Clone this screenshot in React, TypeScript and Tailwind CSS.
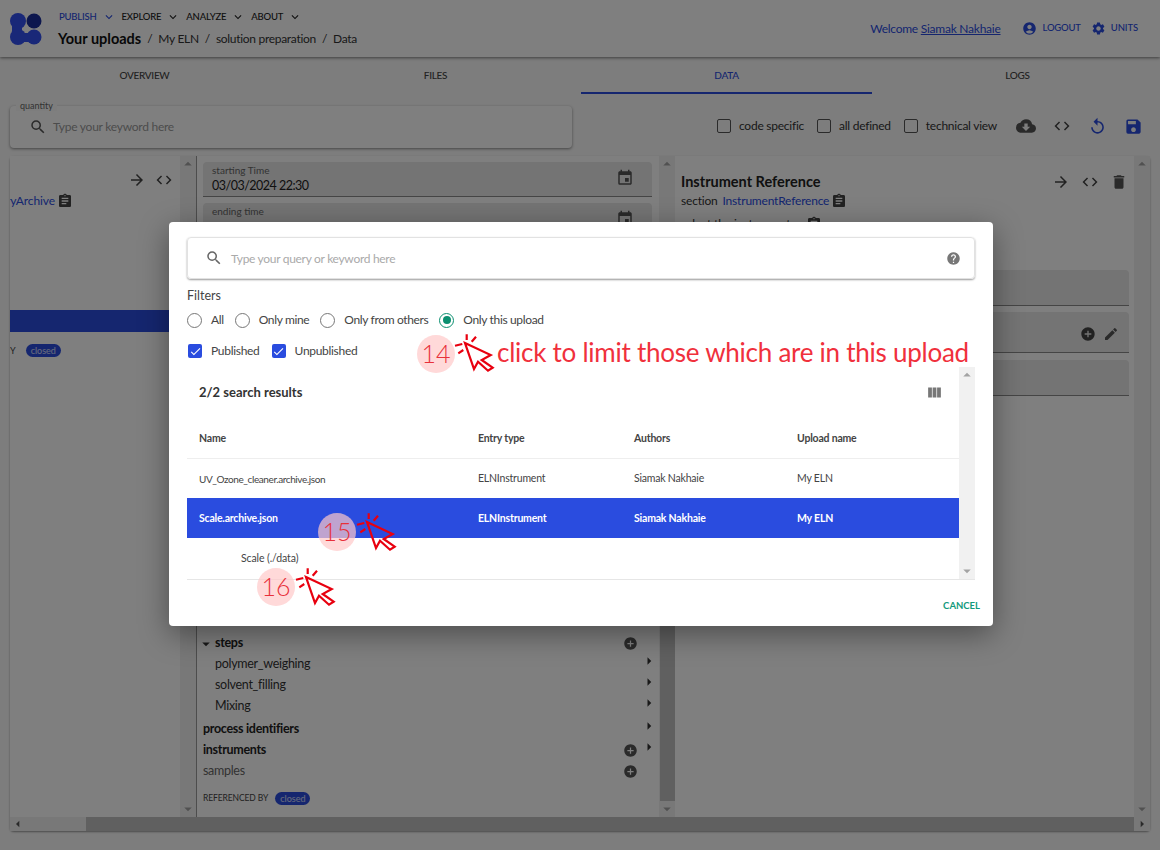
import React from "react";
import {
  MdArrowForward, MdCode, MdAssignment, MdEvent, MdExpandMore, MdAccountCircle, MdSettings, MdSearch,
  MdCloudDownload, MdReplay, MdSave, MdDelete, MdAddCircle, MdEdit, MdHelp, MdViewColumn, MdArrowRight,
  MdArrowDropDown, MdArrowDropUp, MdCheck, MdArrowLeft,
} from "react-icons/md";

const font = { fontFamily: '"Lato", "Noto Sans", sans-serif' };

function Logo() {
  return (
    <svg width="32" height="34" viewBox="0 0 32 34" className="shrink-0">
      <circle cx="24" cy="9" r="7.5" fill="#1b2f9c" />
      <circle cx="8" cy="9" r="8" fill="#3350f0" />
      <circle cx="8" cy="25" r="8" fill="#3350f0" />
      <circle cx="24" cy="25" r="7.5" fill="#3350f0" />
      <rect x="2" y="9" width="10" height="16" fill="#3350f0" />
      <rect x="8" y="21" width="16" height="9" fill="#3350f0" />
    </svg>
  );
}

function NavItem({ label, active }: { label: string; active?: boolean }) {
  return (
    <div className={`flex items-center gap-[5px] text-[9.5px] font-medium tracking-[-0.2px] ${active ? "text-[#2a4cdf]" : "text-[#222]"}`}>
      <span>{label}</span>
      <MdExpandMore size={14} />
    </div>
  );
}

function Cursor({ x, y }: { x: number; y: number }) {
  return (
    <svg width="44" height="44" viewBox="-12 -11 44 44" className="absolute" style={{ left: x - 12, top: y - 11 }}>
      <path d="M0 0 L25.7 12 L16.7 17 L27.7 24.7 L23 27.7 L13 18.7 L9 26 Z" fill="none" stroke="#e8000f" strokeWidth="2.2" strokeLinejoin="miter" />
      <path d="M1.7 -8.7 V-3 M11 -6.3 L6.7 -1.3 M-10 2.7 L-2.7 1 M-6.7 10.3 L-1.7 7" stroke="#e8000f" strokeWidth="2.2" fill="none" />
    </svg>
  );
}

function Badge({ n, x, y }: { n: string; x: number; y: number }) {
  return (
    <div
      className="absolute flex h-[38px] w-[38px] items-center justify-center rounded-full bg-[#ffc8c8]/70 text-[25px] font-light text-[#e8303a]"
      style={{ left: x, top: y }}
    >
      {n}
    </div>
  );
}

function VBar({ thumb }: { thumb?: boolean }) {
  return (
    <div className="flex w-[16px] shrink-0 flex-col items-center justify-between bg-[#f1f1f1] text-[#a3a3a3]">
      <MdArrowDropUp size={18} className="-my-[1px]" />
      {thumb ? <div className="mt-[60px] w-[15px] grow bg-[#c1c1c1]" /> : null}
      <MdArrowDropDown size={18} className="-my-[1px]" />
    </div>
  );
}

function Field({ label, value, h = "h-[35px]", mt = "" }: { label?: string; value?: string; h?: string; mt?: string }) {
  return (
    <div className={`relative flex shrink-0 items-start rounded-t border-b border-[#8a8a8a] bg-[#e8e8e8] px-[9px] pt-[2px] ${h} ${mt}`}>
      <div className="flex flex-col leading-none">
        {label ? <span className="text-[10px] leading-[12px] text-[#666]">{label}</span> : null}
        {value ? <span className="mt-px text-[12.5px] leading-[18px] tracking-[-0.5px] text-[#222]">{value}</span> : null}
      </div>
      {label ? <MdEvent size={18} className="absolute right-[18px] top-[7px] text-[#555]" /> : null}
    </div>
  );
}

function TreeRow({ label, cls, plus, arrow, expand, offset = 0 }: { label: string; cls: string; plus?: boolean; arrow?: boolean; expand?: boolean; offset?: number }) {
  return (
    <div className="relative flex h-[21px] items-center">
      {expand ? <MdArrowDropDown size={18} className="-ml-[6px] text-[#333]" /> : null}
      <span className={`text-[12.5px] tracking-[-0.3px] ${cls}`}>{label}</span>
      {plus ? <MdAddCircle size={15} className="absolute left-[420px] top-[3px] text-[#555]" /> : null}
      {arrow ? <MdArrowRight size={18} className="absolute top-[-2px] text-[#333]" style={{ left: 437 - offset }} /> : null}
    </div>
  );
}

function Radio({ label, on }: { label: string; on?: boolean }) {
  return (
    <div className="flex items-center gap-[9px] text-[12px] tracking-[-0.35px] text-[#444]">
      <span className={`flex h-[15px] w-[15px] items-center justify-center rounded-full border-[1.5px] ${on ? "border-[#0b8f70]" : "border-[#777]"}`}>
        {on ? <span className="h-[8px] w-[8px] rounded-full bg-[#0b8f70]" /> : null}
      </span>
      {label}
    </div>
  );
}

function Check({ label }: { label: string }) {
  return (
    <div className="flex items-center gap-[9px] text-[12px] tracking-[-0.3px] text-[#444]">
      <span className="flex h-[14px] w-[14px] items-center justify-center rounded-[2px] bg-[#2a4cdf] text-white">
        <MdCheck size={13} />
      </span>
      {label}
    </div>
  );
}

function Row({ cells, cls, firstCls = "" }: { cells: string[]; cls: string; firstCls?: string }) {
  return (
    <div className={`grid grid-cols-[279px_156px_163px_1fr] items-center pl-[12px] text-[10.5px] tracking-[-0.2px] ${cls}`}>
      {cells.map((c, i) => (
        <span key={c} className={i === 0 ? firstCls : ""}>{c}</span>
      ))}
    </div>
  );
}

function ToolCheck({ label }: { label: string }) {
  return (
    <div className="flex items-center gap-[8px] text-[12px] tracking-[-0.25px] text-[#333]">
      <span className="h-[14px] w-[14px] rounded-[2px] border-[1.5px] border-[#555]" />
      {label}
    </div>
  );
}

export default function App() {
  return (
    <div style={font} className="relative h-[850px] w-[1160px] overflow-hidden bg-[#fafafa]">
      {/* Header */}
      <header className="relative z-10 flex h-[57px] items-center justify-between bg-white pl-[10px] pr-[22px] shadow-[0_1px_3px_rgba(0,0,0,0.5)]">
        <div className="flex items-center gap-[16px]">
          <Logo />
          <div className="flex flex-col">
            <div className="ml-px flex h-[18px] items-center gap-[6px]">
              <NavItem label="PUBLISH" active />
              <NavItem label="EXPLORE" />
              <NavItem label="ANALYZE" />
              <NavItem label="ABOUT" />
            </div>
            <div className="mt-[2px] flex items-center gap-[6px] text-[12px] tracking-[-0.3px] text-[#333]">
              <span className="text-[14.5px] font-bold tracking-normal text-[#111]">Your uploads</span>
              <span>/</span><span>My ELN</span><span>/</span><span>solution preparation</span><span>/</span><span>Data</span>
            </div>
          </div>
        </div>
        <div className="flex items-center text-[#2a4cdf]">
          <span className="text-[12px] tracking-[-0.25px]">Welcome <span className="underline">Siamak Nakhaie</span></span>
          <MdAccountCircle size={15} className="ml-[21px]" />
          <span className="ml-[6px] text-[9.5px] font-medium tracking-[-0.2px]">LOGOUT</span>
          <MdSettings size={15} className="ml-[10px]" />
          <span className="ml-[5px] text-[9.5px] font-medium tracking-[-0.1px]">UNITS</span>
        </div>
      </header>

      {/* Tabs */}
      <nav className="-ml-px flex h-[37px] pt-px text-[10px] font-medium tracking-[-0.3px] text-[#444]">
        {["OVERVIEW", "FILES", "DATA", "LOGS"].map((t) => (
          <div key={t} className={`flex w-[291px] shrink-0 justify-center pt-[10px] ${t === "DATA" ? "border-b-2 border-[#2a4cdf] text-[#2a4cdf]" : ""}`}>
            {t}
          </div>
        ))}
      </nav>

      {/* Toolbar */}
      <section className="flex h-[54px] items-end justify-between pl-[10px] pr-[17px]">
        <div className="relative flex h-[42px] w-[562px] items-center rounded bg-white pl-[19px] shadow-[0_1px_3px_rgba(0,0,0,0.45)]">
          <span className="absolute -top-[6px] left-[6px] bg-[#fafafa] px-[4px] text-[9px] leading-[11px] text-[#666]">quantity</span>
          <MdSearch size={18} className="text-[#555]" />
          <span className="ml-[6px] text-[12px] tracking-[-0.25px] text-[#999]">Type your keyword here</span>
        </div>
        <div className="mb-[12px] flex items-center">
          <ToolCheck label="code specific" />
          <div className="ml-[13px]"><ToolCheck label="all defined" /></div>
          <div className="ml-[13px]"><ToolCheck label="technical view" /></div>
          <MdCloudDownload size={20} className="ml-[19px] text-[#555]" />
          <MdCode size={18} className="ml-[17px] text-[#444]" />
          <MdReplay size={19} className="ml-[17px] text-[#2a4cdf]" />
          <MdSave size={19} className="ml-[17px] text-[#2a4cdf]" />
        </div>
      </section>

      {/* Panels */}
      <main className="mx-[10px] mt-[8px] flex h-[675px] flex-col rounded shadow-[0_1px_2px_rgba(0,0,0,0.4)]">
        <div className="flex h-[661px]">
          {/* Column 1 */}
          <div className="flex w-[187px] border-r border-[#9a9a9a] bg-white">
            <div className="w-[170px] shrink-0 overflow-hidden">
              <div className="flex justify-end gap-[9px] pt-[15px] text-[#444]">
                <MdArrowForward size={18} />
                <MdCode size={18} className="mr-[7px]" />
              </div>
              <div className="mt-[3px] flex items-center justify-end pr-[107px] text-[12px] tracking-[-0.1px] text-[#2a4cdf]">
                <span className="whitespace-nowrap">EntryArchive</span>
                <MdAssignment size={16} className="ml-[2px] shrink-0 text-[#444]" />
              </div>
              <div className="mt-[100px] h-[22px] bg-[#2a4cdf]" />
              <div className="mt-[12px] flex items-center">
                <span className="text-[9px] text-[#444]">Y</span>
                <span className="ml-[10px] rounded-full bg-[#2a4cdf] px-[5px] text-[9px] leading-[13px] text-white/80">closed</span>
              </div>
            </div>
            <VBar />
          </div>

          {/* Column 2 */}
          <div className="flex w-[478px] border-r border-[#9a9a9a] bg-white">
            <div className="flex w-[462px] shrink-0 flex-col pl-[6px] pr-[7px] pt-[6px]">
              <Field label="starting Time" value="03/03/2024 22:30" />
              <Field label="ending time" h="h-[35px]" mt="mt-[6px]" />
              <div className="h-[395px] shrink-0" />
              <TreeRow label="steps" cls="font-bold text-[#222]" plus expand />
              <div className="pl-[12px]">
                <TreeRow label="polymer_weighing" cls="text-[#333]" arrow offset={12} />
                <TreeRow label="solvent_filling" cls="text-[#333]" arrow offset={12} />
                <TreeRow label="Mixing" cls="text-[#333]" arrow offset={12} />
              </div>
              <div className="mt-[2px]"><TreeRow label="process identifiers" cls="font-bold text-[#222]" arrow /></div>
              <TreeRow label="instruments" cls="font-bold text-[#222]" plus arrow />
              <TreeRow label="samples" cls="text-[#666]" plus />
              <div className="mt-[10px] flex items-center gap-[7px]">
                <span className="text-[8.5px] tracking-[-0.1px] text-[#444]">REFERENCED BY</span>
                <span className="rounded-full bg-[#2a4cdf] px-[5px] text-[9px] leading-[13px] text-white/80">closed</span>
              </div>
            </div>
            <VBar thumb />
          </div>

          {/* Column 3 */}
          <div className="flex grow bg-white">
            <div className="flex grow flex-col pl-[6px] pr-[5px]">
              <div className="flex items-center justify-between pr-[1px] pt-[15px]">
                <span className="text-[14.5px] font-bold text-[#222]">Instrument Reference</span>
                <div className="flex items-center gap-[11px] text-[#444]">
                  <MdArrowForward size={18} />
                  <MdCode size={18} />
                  <MdDelete size={18} className="text-[#555]" />
                </div>
              </div>
              <div className="mt-[-1px] flex items-center text-[12px] tracking-[-0.2px] text-[#333]">
                <span>section</span>
                <span className="ml-[5px] text-[#2a4cdf]">InstrumentReference</span>
                <MdAssignment size={16} className="ml-[2px] text-[#444]" />
              </div>
              <div className="mt-[6px] flex h-[17px] shrink-0 items-center text-[12px] tracking-[-0.1px] text-[#333]">
                <span>select the instrument</span>
                <MdAssignment size={16} className="ml-[16px] text-[#444]" />
              </div>
              <div className="h-[37px] shrink-0" />
              <Field h="h-[36px]" />
              <div className="relative">
                <Field h="h-[41px]" mt="mt-[6px]" />
                <MdAddCircle size={16} className="absolute right-[33px] top-[20px] text-[#444]" />
                <MdEdit size={16} className="absolute right-[10px] top-[20px] text-[#555]" />
              </div>
              <Field h="h-[36px]" mt="mt-[7px]" />
            </div>
            <VBar />
          </div>
        </div>
        {/* Horizontal scrollbar */}
        <div className="flex h-[14px] items-center bg-[#f1f1f1] text-[#555]">
          <MdArrowLeft size={16} className="shrink-0" />
          <div className="ml-[60px] h-[14px] w-[1051px] bg-[#c1c1c1]" />
          <MdArrowRight size={16} className="ml-auto shrink-0" />
        </div>
      </main>

      {/* Backdrop */}
      <div className="absolute inset-0 z-20 bg-black/50" />

      {/* Dialog */}
      <div className="absolute left-[169px] top-[222px] z-30 flex h-[404px] w-[824px] flex-col rounded bg-white px-[18px] pt-[15px] shadow-[0_8px_30px_rgba(0,0,0,0.4)]">
        <div className="flex h-[42px] shrink-0 items-center rounded border border-[#e2e2e2] pl-[17px] pr-[13px] shadow-[0_1px_2px_rgba(0,0,0,0.4)]">
          <MdSearch size={18} className="text-[#666]" />
          <span className="ml-[8px] grow pt-[1px] text-[12px] tracking-[-0.3px] text-[#aaa]">Type your query or keyword here</span>
          <MdHelp size={15} className="text-[#777]" />
        </div>
        <div className="mt-[9px] text-[12.5px] leading-[16px] text-[#444]">Filters</div>
        <div className="mt-[8px] flex h-[16px] items-center gap-[11px]">
          <Radio label="All" />
          <Radio label="Only mine" />
          <Radio label="Only from others" />
          <Radio label="Only this upload" on />
        </div>
        <div className="ml-px mt-[15px] flex h-[16px] items-center gap-[12px]">
          <Check label="Published" />
          <Check label="Unpublished" />
        </div>
        <div className="mt-[8px] flex h-[213px] w-[788px] shrink-0 border-b border-[#e6e6e6]">
          <div className="flex w-[772px] flex-col">
            <div className="flex h-[51px] items-center justify-between pl-[12px] pr-[16px]">
              <span className="text-[13px] font-bold text-[#333]">2/2 search results</span>
              <MdViewColumn size={17} className="text-[#777]" />
            </div>
            <Row cells={["Name", "Entry type", "Authors", "Upload name"]} cls="h-[41px] border-b border-[#eee] pt-[2px] font-bold text-[#444]" />
            <Row cells={["UV_Ozone_cleaner.archive.json", "ELNInstrument", "Siamak Nakhaie", "My ELN"]} cls="h-[39px] pt-px text-[#444]" firstCls="text-[10px] tracking-[-0.4px]" />
            <Row cells={["Scale.archive.json", "ELNInstrument", "Siamak Nakhaie", "My ELN"]} cls="h-[40px] bg-[#2a4cdf] pt-[2px] font-bold text-white" />
            <div className="flex h-[41px] items-center pl-[54px] text-[10.5px] tracking-[-0.1px] text-[#444]">Scale (./data)</div>
          </div>
          <VBar />
        </div>
        <div className="mr-[-5px] mt-[19px] text-right text-[9.5px] font-bold text-[#129a7c]">CANCEL</div>

        {/* Annotations */}
        <div className="absolute left-[328px] top-[113px] whitespace-nowrap text-[26px] leading-[34px] tracking-[-0.25px] text-[#f0303c]">click to limit those which are in this upload</div>
        <Badge n="14" x={248} y={113} />
        <Cursor x={296} y={121} />
        <Badge n="15" x={149} y={291} />
        <Cursor x={198} y={300} />
        <Badge n="16" x={88} y={346} />
        <Cursor x={137} y={355} />
      </div>
    </div>
  );
}
